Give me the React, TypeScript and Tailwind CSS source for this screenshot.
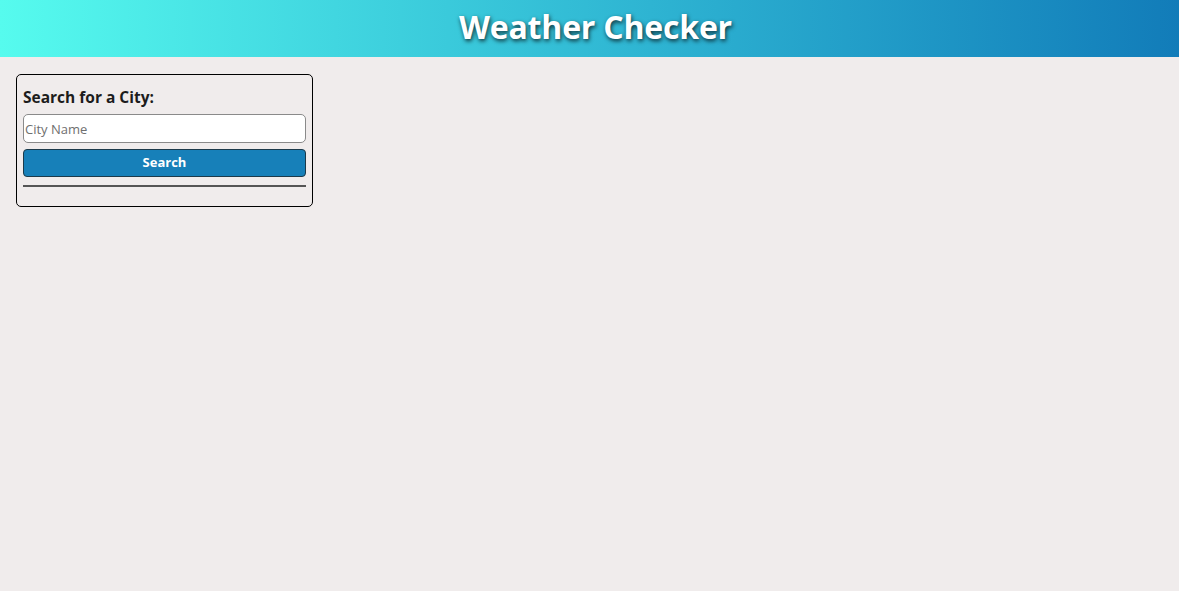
export default function App() {
  return (
    <div className="min-h-[591px] bg-[#f0ecec] font-['Open_Sans','Noto_Sans',sans-serif]">
      <header className="flex h-[57px] items-center justify-center bg-gradient-to-r from-[#56fbee] to-[#127cb9] pl-[12px]">
        <h1 className="-mt-[3px] text-[32px] font-bold leading-none tracking-[-0.2px] text-white [text-shadow:1px_2px_4px_rgba(0,0,0,0.75)]">
          Weather Checker
        </h1>
      </header>

      <main className="p-4 pt-[17px]">
        <section className="flex w-[297px] flex-col rounded-[5px] border border-black p-[6px]">
          <h3 className="mt-1 mb-[5px] text-[15.5px] leading-6 font-bold text-[#1c1c1c]">
            Search for a City:
          </h3>
          <input
            type="text"
            placeholder="City Name"
            className="h-[29px] w-full rounded-[5px] border border-[#8a8a8a] bg-white px-[1px] text-[13px] text-black placeholder:text-[#6f6f6f] outline-none"
          />
          <button
            type="button"
            className="mt-[6px] h-[28px] w-full rounded-[4px] border border-[#1c3a4a] bg-[#1780b9] text-[13px] font-bold text-white"
          >
            Search
          </button>
          <hr className="mt-2 mb-[13px] border-t-2 border-[#555]" />
        </section>
      </main>
    </div>
  )
}
